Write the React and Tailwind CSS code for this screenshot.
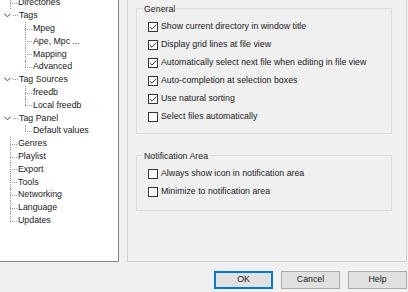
import React from "react";

const tree = [
  { label: "Directories", leaf: true },
  { label: "Tags", children: ["Mpeg", "Ape, Mpc ...", "Mapping", "Advanced"] },
  { label: "Tag Sources", children: ["freedb", "Local freedb"] },
  { label: "Tag Panel", children: ["Default values"] },
  { label: "Genres", leaf: true },
  { label: "Playlist", leaf: true },
  { label: "Export", leaf: true },
  { label: "Tools", leaf: true },
  { label: "Networking", leaf: true },
  { label: "Language", leaf: true },
  { label: "Updates", leaf: true, last: true },
];

const general = [
  { label: "Show current directory in window title", checked: true },
  { label: "Display grid lines at file view", checked: true },
  { label: "Automatically select next file when editing in file view", checked: true },
  { label: "Auto-completion at selection boxes", checked: true },
  { label: "Use natural sorting", checked: true },
  { label: "Select files automatically", checked: false },
];

const notification = [
  { label: "Always show icon in notification area", checked: false },
  { label: "Minimize to notification area", checked: false },
];

function Chevron() {
  return (
    <svg width="7" height="5" viewBox="0 0 7 5" className="ml-[4px]">
      <path d="M0.5 0.8 L3.5 3.8 L6.5 0.8" fill="none" stroke="#404040" strokeWidth="1" />
    </svg>
  );
}

// dotted connector: vertical line on the left, horizontal stub in the middle
function Connector({ last }) {
  return (
    <span className="relative h-full w-[7px]">
      <span
        className={
          last
            ? "absolute left-0 top-0 h-1/2 border-l border-dotted border-[#999]"
            : "absolute left-0 top-0 h-full border-l border-dotted border-[#999]"
        }
      />
      <span className="absolute left-0 top-1/2 w-full border-t border-dotted border-[#999]" />
    </span>
  );
}

function TreeRow({ children, indent, expander, last }) {
  return (
    <div className="flex h-[12.8px] items-center">
      {expander ? (
        <span className="flex w-[18px] items-center">
          <Chevron />
          <span className="ml-[2px] w-[5px] border-t border-dotted border-[#999]" />
        </span>
      ) : (
        <>
          <span className={indent ? "w-[25px]" : "w-[10px]"} />
          <Connector last={last} />
        </>
      )}
      <span className="ml-[1px] whitespace-nowrap">{children}</span>
    </div>
  );
}

function Check({ checked, label }) {
  return (
    <div className="flex h-[18px] items-center">
      <span className="flex h-[10px] w-[10px] items-center justify-center border border-[#333] bg-white">
        {checked && (
          <svg width="8" height="8" viewBox="0 0 8 8">
            <path d="M0.8 4 L3 6.2 L7.2 1.6" fill="none" stroke="#333" strokeWidth="1" />
          </svg>
        )}
      </span>
      <span className="ml-[3px] whitespace-nowrap">{label}</span>
    </div>
  );
}

function Group({ title, className, children }) {
  return (
    <div className={"relative w-[256px] border border-[#dcdcdc] " + className}>
      <span className="absolute -top-[6px] left-[6px] bg-[#f0f0f0] px-[1px] leading-[12px]">{title}</span>
      {children}
    </div>
  );
}

function Button({ children, primary }) {
  return (
    <button
      className={
        primary
          ? "h-[18px] w-[59px] border-2 border-[#0078d7] bg-[#e1e1e1]"
          : "h-[18px] w-[59px] border border-[#adadad] bg-[#e1e1e1]"
      }
    >
      {children}
    </button>
  );
}

export default function App() {
  return (
    <div
      className="h-[292px] w-[408px] overflow-hidden bg-[#f0f0f0] text-[8.8px] text-[#1a1a1a]"
      style={{ fontFamily: '"Liberation Sans", Arial, sans-serif' }}
    >
      <div className="flex h-[262px]">
        {/* Tree */}
        <div className="h-[262px] w-[119px] overflow-hidden border-r border-b border-[#828790] bg-white">
          <div className="-mt-[3.4px]">
            {tree.map((item) => (
              <React.Fragment key={item.label}>
                <TreeRow expander={!!item.children} last={item.last}>
                  {item.label}
                </TreeRow>
                {item.children &&
                  item.children.map((c, i) => (
                    <TreeRow key={c} indent last={i === item.children.length - 1}>
                      {c}
                    </TreeRow>
                  ))}
              </React.Fragment>
            ))}
          </div>
        </div>

        {/* Settings page */}
        <div className="ml-[8px] h-[262px] w-[280px] border-r border-b border-l border-[#d0d0d0] pl-[8px]">
          <Group title="General" className="mt-[8px] pt-[9px] pb-[7px] pl-[11px]">
            {general.map((g) => (
              <Check key={g.label} {...g} />
            ))}
          </Group>
          <Group title="Notification Area" className="mt-[21px] pt-[9px] pb-[9px] pl-[11px]">
            {notification.map((g) => (
              <Check key={g.label} {...g} />
            ))}
          </Group>
        </div>
      </div>

      <div className="mt-[9px] flex justify-end gap-[8px] pr-[1px]">
        <Button primary>OK</Button>
        <Button>Cancel</Button>
        <Button>Help</Button>
      </div>
    </div>
  );
}
